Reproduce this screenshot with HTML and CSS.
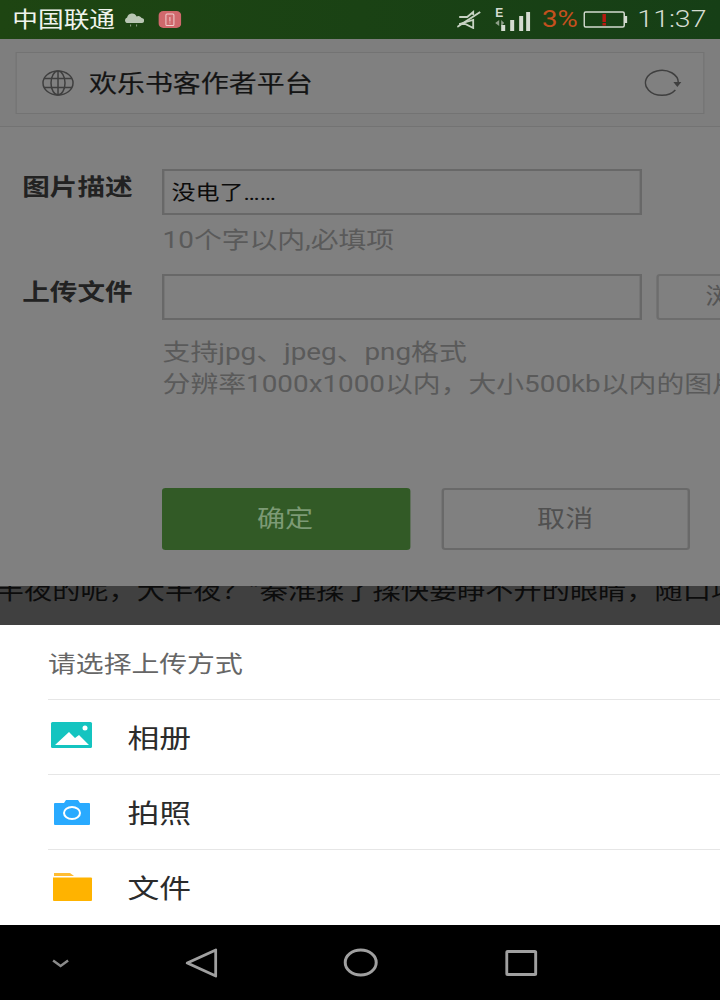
FILE: index.html
```html
<!DOCTYPE html>
<html lang="zh">
<head>
<meta charset="utf-8">
<title>上传</title>
<link rel="stylesheet" href="styles.css">
</head>
<body>
<div class="screen">
  <header class="status">
    <span class="carrier">中国联通</span>
    <svg class="ic-cloud" viewBox="0 0 21 14" preserveAspectRatio="none"><path d="M3 10a3 3 0 0 1 .5-5.500A5 5 0 0 1 13 3.500a3.500 3.500 0 0 1 5 1.500a2.500 2.500 0 0 1 0 5z" fill="#b9c6b4"/><path d="M7 11.500v2M13 11.500v2" stroke="#8fa389" stroke-width="1"/></svg>
    <svg class="ic-badge" viewBox="0 0 23 17" preserveAspectRatio="none"><rect x="0" y="0" width="23" height="17" rx="5" fill="#d0686c"/><rect x="7.500" y="3" width="8" height="11.500" rx="1" fill="none" stroke="#f1cfcf" stroke-width="1"/><path d="M11.500 6v4.500M11.500 11.500v1" stroke="#f1cfcf" stroke-width="1"/></svg>
    <svg class="ic-mute" viewBox="0 0 24 19" preserveAspectRatio="none"><path d="M2 7h8l6-5v3M16 10v8l-8-4H2z" fill="none" stroke="#c7d2c3" stroke-width="1.800"/><path d="M0 17L23 2" stroke="#c7d2c3" stroke-width="2"/></svg>
    <svg class="ic-signal" viewBox="0 0 37 24" preserveAspectRatio="none"><text x="2" y="10" class="e-mark">E</text><path d="M2 16l4-3v6zM8 13l3 3-3 3z" fill="#8fa08a"/><rect x="8" y="18" width="4" height="6" fill="#d5dcd1"/><rect x="17" y="13" width="4" height="11" fill="#d5dcd1"/><rect x="26" y="9" width="4" height="15" fill="#d5dcd1"/><rect x="33" y="5" width="4" height="19" fill="#d5dcd1"/></svg>
    <span class="percent">3%</span>
    <svg class="ic-batt" viewBox="0 0 44 17" preserveAspectRatio="none"><rect x="1" y="1" width="40" height="15" rx="1.500" fill="none" stroke="#d3dacf" stroke-width="1.500"/><rect x="41.500" y="5" width="2.500" height="7" fill="#d3dacf"/><path d="M21 3v8" stroke="#b81a10" stroke-width="3.500"/><path d="M21 12v2.500" stroke="#b81a10" stroke-width="3.500"/></svg>
    <span class="clock">11:37</span>
  </header>

  <main class="page">
    <div class="urlwrap">
      <div class="urlbar">
        <svg class="ic-globe" viewBox="0 0 32 26" preserveAspectRatio="none"><g fill="none" stroke="#3f3f3f" stroke-width="1.500"><ellipse cx="16" cy="13" rx="15" ry="12"/><ellipse cx="16" cy="13" rx="7" ry="12"/><path d="M16 1v24M2 8.500h28M2 17.500h28"/></g></svg>
        <span class="urltitle">欢乐书客作者平台</span>
        <svg class="ic-reload" viewBox="0 0 37 28" preserveAspectRatio="none"><path d="M34 14A16.500 12.500 0 1 0 31 21" fill="none" stroke="#3f3f3f" stroke-width="1.500"/><path d="M29 13h8l-4 5z" fill="#3f3f3f"/></svg>
      </div>
    </div>
    <form class="form">
      <div class="row">
        <span class="label">图片描述</span>
        <div class="field">
          <div class="input"><span class="value">没电了……</span></div>
          <p class="hint first">10个字以内,必填项</p>
        </div>
      </div>
      <div class="row second">
        <span class="label">上传文件</span>
        <div class="field">
          <div class="filerow">
            <div class="input"></div>
            <div class="browse">浏览</div>
          </div>
          <p class="hint formats">支持jpg、jpeg、png格式</p>
          <p class="hint">分辨率1000x1000以内，大小500kb以内的图片</p>
        </div>
      </div>
      <div class="actions">
        <div class="btn ok">确定</div>
        <div class="btn cancel">取消</div>
      </div>
    </form>
  </main>

  <div class="behind"><p class="behind-text">半夜的呢，大半夜？”秦淮揉了揉快要睁不开的眼睛，随口填</p></div>

  <section class="sheet">
    <div class="sheet-title">请选择上传方式</div>
    <div class="option">
      <svg class="opt-icon" viewBox="0 0 48 30" preserveAspectRatio="none"><rect x="3" y="1" width="41" height="26" rx="1.500" fill="#14c4c0"/><circle cx="37" cy="7" r="2.500" fill="#fff"/><path d="M7 24L21 11l6 6 4-3 10 10z" fill="#fff"/></svg>
      <span>相册</span>
    </div>
    <div class="option">
      <svg class="opt-icon" viewBox="0 0 48 30" preserveAspectRatio="none"><path d="M7 7h9l2-3h12l2 3h9a1 1 0 0 1 1 1v20a1 1 0 0 1-1 1H7a1 1 0 0 1-1-1V8a1 1 0 0 1 1-1z" fill="#29aaff"/><ellipse cx="24" cy="17" rx="8" ry="6" fill="none" stroke="#fff" stroke-width="2"/></svg>
      <span>拍照</span>
    </div>
    <div class="option last">
      <svg class="opt-icon" viewBox="0 0 48 30" preserveAspectRatio="none"><path d="M6 1h16l4 3H6z" fill="#ffbd33"/><path d="M5 5.500h38a1 1 0 0 1 1 1V28a1 1 0 0 1-1 1H6a1 1 0 0 1-1-1z" fill="#ffb300"/></svg>
      <span>文件</span>
    </div>
  </section>

  <nav class="navbar">
    <svg class="nv-down" viewBox="0 0 18 9" preserveAspectRatio="none"><path d="M1.500 1.500L9 7l7.500-5.500" fill="none" stroke="#8a8a8a" stroke-width="2.500"/></svg>
    <svg class="nv-back" viewBox="0 0 33 30" preserveAspectRatio="none"><path d="M2.500 15L31 2v26z" fill="none" stroke="#a0a0a0" stroke-width="3" stroke-linejoin="round"/></svg>
    <svg class="nv-home" viewBox="0 0 35 29" preserveAspectRatio="none"><ellipse cx="17.500" cy="14.500" rx="15.500" ry="12.500" fill="none" stroke="#a0a0a0" stroke-width="3"/></svg>
    <svg class="nv-recent" viewBox="0 0 32 26" preserveAspectRatio="none"><rect x="1.500" y="1.500" width="29" height="23" rx="1" fill="none" stroke="#a0a0a0" stroke-width="3"/></svg>
  </nav>
</div>
</body>
</html>
```
FILE: styles.css
```css
* { box-sizing: border-box; }
html, body { margin: 0; padding: 0; width: 720px; height: 1000px; overflow: hidden; background: #000; }
p { margin: 0; }
svg { display: block; flex: none; }

.screen {
  width: 600px;
  height: 1000px;
  display: flex;
  flex-direction: column;
  overflow: hidden;
  transform: scaleX(1.2);
  transform-origin: 0 0;
  font-family: Roboto, "Noto Sans CJK SC", sans-serif;
}

/* status bar */
.status {
  height: 39px;
  flex: none;
  display: flex;
  align-items: center;
  padding-left: 10.300px;
  background: linear-gradient(90deg, #1e4512, #163f16);
  color: #e8eee5;
}
.carrier { width: 92.500px; font-size: 21.400px; line-height: 39px; color: #f0f4ee; }
.ic-cloud { width: 17.500px; height: 14px; margin-top: 1px; }
.ic-badge { width: 19.200px; height: 17px; margin-left: 11.700px; }
.ic-mute { width: 20px; height: 19px; margin-left: 229.500px; }
.ic-signal { width: 30.800px; height: 24px; margin-left: 10.700px; margin-bottom: 1px; }
.e-mark { font-family: "Liberation Sans", sans-serif; font-size: 12px; font-weight: 700; fill: #d5dcd1; }
.percent { width: 33.800px; margin-left: 9.500px; font-size: 23px; line-height: 39px; color: #c4501e; }
.ic-batt { width: 36.700px; height: 17px; margin-left: 0.500px; }
.clock { margin-left: 8.500px; font-size: 23.700px; font-weight: 300; line-height: 39px; color: #d5dcd1; }

/* dimmed page */
.page { height: 547px; flex: none; background: #808080; overflow: hidden; }
.urlwrap { height: 88px; padding: 13px 13.300px 0; border-bottom: 1px solid #737373; background: #7e7e7e; }
.urlbar {
  height: 62px;
  display: flex;
  align-items: center;
  padding-left: 20.700px;
  border: 1px solid #737373;
  background: #808080;
}
.ic-globe { width: 26.700px; height: 26px; }
.urltitle { width: 463.300px; margin-left: 12.500px; margin-top: -2px; font-size: 23.300px; color: #141414; -webkit-text-stroke: 0.2px #141414; }
.ic-reload { width: 30.800px; height: 28px; margin-top: -1px; }

.form { padding: 42px 0 0 18.500px; }
.row { display: flex; align-items: flex-start; }
.row.second { margin-top: 18px; }
.label { width: 117px; flex: none; margin-top: 2px; font-size: 23px; line-height: 34px; font-weight: 700; color: #222; }
.field { min-width: 0; }
.input {
  width: 399.500px;
  height: 46px;
  flex: none;
  margin-left: -0.500px;
  padding-left: 6px;
  border: 2px solid #686868;
  font-size: 20px;
  line-height: 42px;
  color: #0c0c0c;
}
.value { display: block; padding-top: 1px; }
.hint { font-size: 23.200px; line-height: 32px; color: #5a5a5a; white-space: nowrap; }
.hint.first { margin-top: 9px; }
.hint.formats { margin-top: 16px; }
.filerow { display: flex; gap: 12.800px; width: 600px; }
.browse {
  width: 127px;
  height: 46px;
  flex: none;
  border: 2px solid #6d6d6d;
  border-radius: 3px;
  text-align: center;
  font-size: 23px;
  line-height: 42px;
  color: #555;
}

.actions { display: flex; gap: 26.700px; padding: 88px 0 0 116.500px; }
.btn {
  width: 206.700px;
  height: 62px;
  padding-right: 1.500px;
  border-radius: 3px;
  text-align: center;
  font-size: 23.400px;
  line-height: 58px;
}
.btn.ok { background: #325a26; border: 2px solid #325a26; color: #7d9a75; }
.btn.cancel { border: 2px solid #696969; color: #505050; }

/* page text visible behind the dim layer */
.behind { height: 39px; flex: none; overflow: hidden; background: #404040; }
.behind-text {
  margin: -7px 0 0 -3.500px;
  font-size: 23.500px;
  line-height: 24px;
  white-space: nowrap;
  color: #0c0c0c;
}

/* bottom sheet */
.sheet { height: 300px; flex: none; padding-left: 40px; background: #fff; }
.sheet-title {
  height: 75px;
  display: flex;
  align-items: center;
  border-bottom: 1px solid #e6e6e6;
  font-size: 23.200px;
  color: #666;
}
.option {
  height: 75px;
  padding-bottom: 2px;
  display: flex;
  align-items: center;
  border-bottom: 1px solid #e6e6e6;
  font-size: 26.500px;
  color: #2b2b2b;
}
.option.last { border-bottom: 0; }
.opt-icon { width: 40px; height: 30px; margin-right: 26.300px; }

/* navigation bar */
.navbar { flex: 1; display: flex; align-items: center; padding-left: 42.500px; background: #000; }
.nv-down { width: 15px; height: 9px; margin-top: 1px; }
.nv-back { width: 27.500px; height: 30px; margin-left: 96px; }
.nv-home { width: 29.200px; height: 29px; margin-left: 105.200px; }
.nv-recent { width: 26.700px; height: 26px; margin-left: 106px; }
```
